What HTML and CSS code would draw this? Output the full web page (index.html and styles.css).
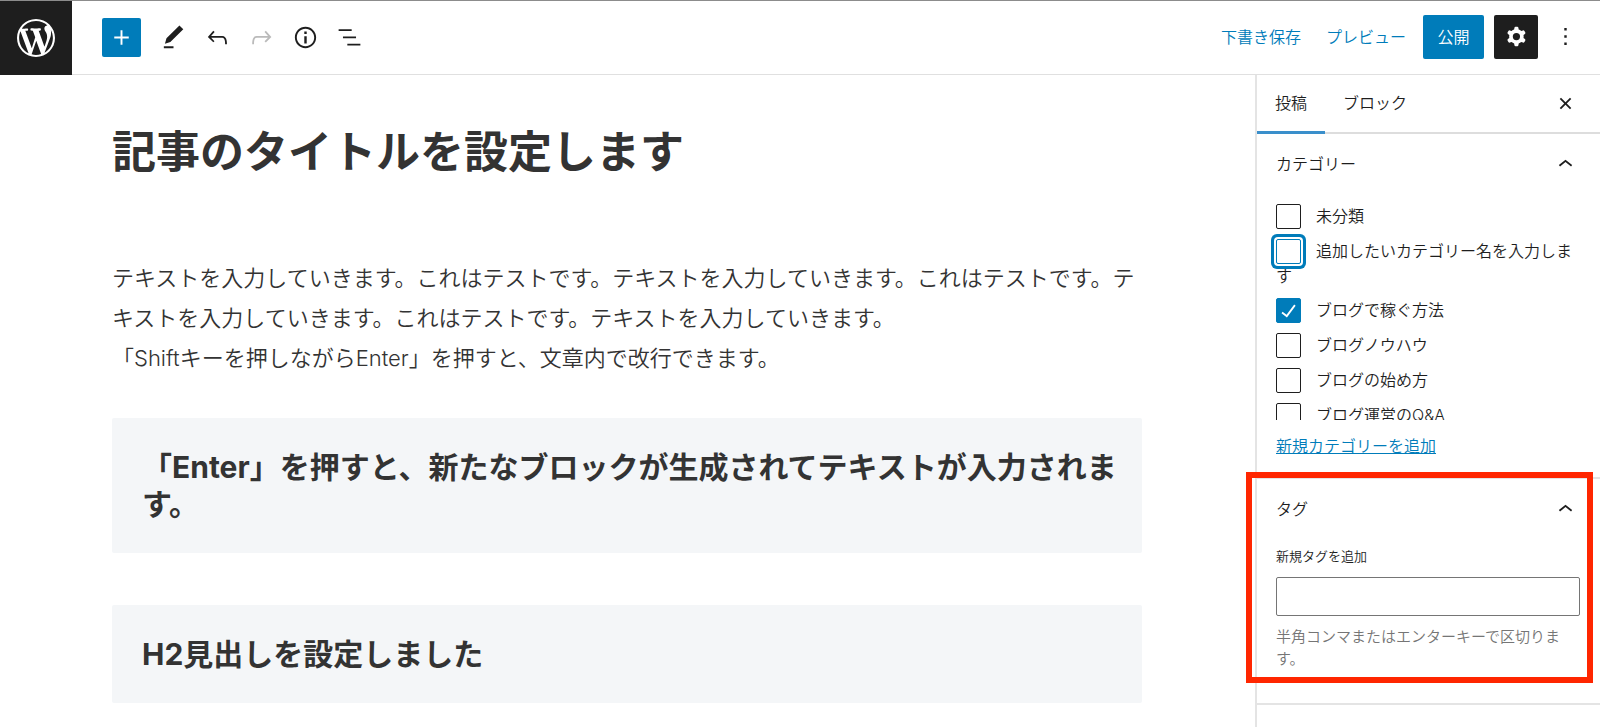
FILE: index.html
```html
<!DOCTYPE html>
<html lang="ja">
<head>
  <meta charset="UTF-8" />
  <meta name="viewport" content="width=device-width, initial-scale=1.0" />
  <title>投稿を編集</title>
  <link rel="stylesheet" href="styles.css">
</head>
<body>
  <!-- Top toolbar -->
  <header class="header">
    <a href="#" class="logo" aria-label="WordPress">
      <svg viewBox="0 0 20 20"><path d="M20 10c0-5.51-4.49-10-10-10C4.48 0 0 4.49 0 10c0 5.52 4.48 10 10 10 5.51 0 10-4.48 10-10zM7.78 15.37L4.37 6.22c.55-.02 1.17-.08 1.17-.08.5-.06.44-1.13-.06-1.11 0 0-1.45.11-2.37.11-.18 0-.37 0-.58-.01C4.12 2.69 6.87 1.11 10 1.11c2.33 0 4.45.87 6.05 2.34-.68-.11-1.65.39-1.65 1.58 0 .74.45 1.36.9 2.1.35.61.55 1.36.55 2.46 0 1.49-1.4 5-1.4 5l-3.03-8.37c.54-.02.82-.17.82-.17.5-.05.44-1.25-.06-1.22 0 0-1.44.12-2.38.12-.87 0-2.33-.12-2.33-.12-.5-.03-.56 1.2-.06 1.22l.92.08 1.26 3.41zM17.41 10c.24-.64.74-1.87.43-4.25.7 1.29 1.05 2.71 1.05 4.25 0 3.29-1.73 6.24-4.4 7.78.97-2.59 1.94-5.2 2.92-7.78zM6.1 18.09C3.12 16.65 1.11 13.53 1.11 10c0-1.3.23-2.48.72-3.59C3.25 10.3 4.67 14.2 6.1 18.09zm4.03-6.63l2.58 6.98c-.86.29-1.76.45-2.71.45-.79 0-1.57-.11-2.29-.33.81-2.38 1.62-4.74 2.42-7.1z"/></svg>
    </a>
    <div class="tools">
      <button type="button" class="add-button" aria-label="ブロックを追加">
        <svg class="icon" viewBox="0 0 24 24"><path d="M18 11.2h-5.2V6h-1.6v5.2H6v1.6h5.2V18h1.6v-5.2H18z"/></svg>
      </button>
      <button type="button" class="icon-button" aria-label="ツール">
        <svg class="icon" viewBox="0 0 24 24"><path d="M20.1 5.1L16.9 2 6.2 12.7l-1.3 4.4 4.5-1.3L20.1 5.1zM4 20.8h8v-1.5H4v1.5z"/></svg>
      </button>
      <button type="button" class="icon-button" aria-label="元に戻す">
        <svg class="icon" viewBox="0 0 24 24"><path d="M18.3 11.7c-.6-.6-1.4-.9-2.3-.9H6.7l2.9-3.3-1.1-1-4.5 5L8.5 16l1-1-2.7-2.7H16c.5 0 .9.2 1.3.5 1 1 1 3.4 1 4.5v.3h1.5v-.2c0-1.5 0-4.3-1.5-5.7z"/></svg>
      </button>
      <button type="button" class="icon-button" aria-label="やり直す" disabled>
        <svg class="icon" viewBox="0 0 24 24"><path d="M15.6 6.5l-1.1 1 2.9 3.3H8c-.9 0-1.7.3-2.3.9-1.4 1.5-1.4 4.2-1.4 5.6v.2h1.5v-.3c0-1.1 0-3.5 1-4.5.3-.3.7-.5 1.3-.5h9.2L14.5 15l1.1 1.1 4.6-4.6-4.6-5z"/></svg>
      </button>
      <button type="button" class="icon-button" aria-label="詳細">
        <svg class="icon" viewBox="0 0 24 24"><path d="M12 3.2c-4.8 0-8.8 3.9-8.8 8.8 0 4.8 3.9 8.8 8.8 8.8 4.8 0 8.8-3.9 8.8-8.8 0-4.8-4-8.8-8.8-8.8zm0 16c-4 0-7.2-3.3-7.2-7.2C4.8 8 8 4.8 12 4.8s7.2 3.3 7.2 7.2c0 4-3.2 7.2-7.2 7.2zM11 17h2v-6h-2v6zm0-8h2V7h-2v2z"/></svg>
      </button>
      <button type="button" class="icon-button" aria-label="リスト表示">
        <svg class="icon" viewBox="0 0 24 24"><path d="M13.8 5.2H3v1.5h10.8V5.2zm-3.6 12v1.5H21v-1.5H10.2zm7.2-6H6.6v1.5h10.8v-1.5z"/></svg>
      </button>
    </div>
    <div class="actions">
      <button type="button" class="text-button">下書き保存</button>
      <button type="button" class="text-button">プレビュー</button>
      <button type="button" class="publish-button">公開</button>
      <button type="button" class="settings-button" aria-label="設定">
        <svg class="icon" viewBox="0 0 24 24"><path fill-rule="evenodd" d="M10.289 4.836A1 1 0 0111.275 4h1.306a1 1 0 01.987.836l.244 1.466c.787.26 1.503.679 2.108 1.218l1.393-.522a1 1 0 011.216.437l.653 1.13a1 1 0 01-.23 1.273l-1.148.944a6.025 6.025 0 010 2.435l1.149.946a1 1 0 01.23 1.272l-.653 1.13a1 1 0 01-1.216.437l-1.394-.522c-.605.54-1.32.958-2.108 1.218l-.244 1.466a1 1 0 01-.987.836h-1.306a1 1 0 01-.986-.836l-.244-1.466a5.995 5.995 0 01-2.108-1.218l-1.394.522a1 1 0 01-1.217-.436l-.653-1.131a1 1 0 01.23-1.272l1.149-.946a6.026 6.026 0 010-2.435l-1.148-.944a1 1 0 01-.23-1.272l.653-1.131a1 1 0 011.217-.437l1.393.522a5.994 5.994 0 012.108-1.218l.244-1.466zM14.929 12a3 3 0 11-6 0 3 3 0 016 0z"/></svg>
      </button>
      <button type="button" class="icon-button" aria-label="オプション">
        <svg class="icon" viewBox="0 0 24 24"><path d="M13 19h-2v-2h2v2zm0-6h-2v-2h2v2zm0-6h-2V5h2v2z"/></svg>
      </button>
    </div>
  </header>

  <div class="main">
    <!-- Post content -->
    <main class="editor">
      <h1 class="post-title">記事のタイトルを設定します</h1>
      <p class="post-text">テキストを入力していきます。これはテストです。テキストを入力していきます。これはテストです。テキストを入力していきます。これはテストです。テキストを入力していきます。<br>「Shiftキーを押しながらEnter」を押すと、文章内で改行できます。</p>
      <h2 class="post-heading">「Enter」を押すと、新たなブロックが生成されてテキストが入力されます。</h2>
      <h2 class="post-heading">H2見出しを設定しました</h2>
    </main>

    <!-- Settings sidebar -->
    <aside class="sidebar">
      <div class="tabs">
        <button type="button" class="tab active">投稿</button>
        <button type="button" class="tab">ブロック</button>
        <button type="button" class="close-button" aria-label="設定を閉じる">
          <svg class="icon" viewBox="0 0 24 24"><path d="M12 13.06l3.712 3.713 1.061-1.06L13.061 12l3.712-3.712-1.06-1.06L12 10.938 8.288 7.227l-1.061 1.06L10.939 12l-3.712 3.712 1.06 1.061L12 13.061z"/></svg>
        </button>
      </div>

      <section class="panel">
        <button type="button" class="panel-toggle" aria-expanded="true">
          カテゴリー
          <svg class="icon" viewBox="0 0 24 24"><path d="M6.5 12.4L12 8l5.5 4.4-.9 1.2L12 10l-4.5 3.6-1-1.2z"/></svg>
        </button>
        <div class="category-list">
          <div class="category"><input type="checkbox" id="cat1"><label for="cat1">未分類</label></div>
          <div class="category"><input type="checkbox" id="cat2" class="focused"><label for="cat2">追加したいカテゴリー名を入力します</label></div>
          <div class="category"><input type="checkbox" id="cat3" checked><label for="cat3">ブログで稼ぐ方法</label></div>
          <div class="category"><input type="checkbox" id="cat4"><label for="cat4">ブログノウハウ</label></div>
          <div class="category"><input type="checkbox" id="cat5"><label for="cat5">ブログの始め方</label></div>
          <div class="category"><input type="checkbox" id="cat6"><label for="cat6">ブログ運営のQ&amp;A</label></div>
        </div>
        <a href="#" class="add-category">新規カテゴリーを追加</a>
      </section>

      <section class="panel tag-panel">
        <button type="button" class="panel-toggle" aria-expanded="true">
          タグ
          <svg class="icon" viewBox="0 0 24 24"><path d="M6.5 12.4L12 8l5.5 4.4-.9 1.2L12 10l-4.5 3.6-1-1.2z"/></svg>
        </button>
        <label class="tag-label" for="newTag">新規タグを追加</label>
        <input type="text" id="newTag" class="tag-input">
        <p class="tag-help">半角コンマまたはエンターキーで区切ります。</p>
        <div class="highlight"></div>
      </section>
    </aside>
  </div>
</body>
</html>
```
FILE: styles.css
```css
* {
  box-sizing: border-box;
}
body {
  margin: 0;
  height: 100vh;
  display: flex;
  flex-direction: column;
  overflow: hidden;
  background: #fff;
  color: #1e1e1e;
  font-family: Inter, "Noto Sans CJK JP", sans-serif;
  font-size: 16px;
  font-weight: 350;
  line-height: 24px;
}
button,
input {
  font: inherit;
  color: inherit;
}
button {
  display: flex;
  align-items: center;
  justify-content: center;
  padding: 0;
  border: none;
  background: none;
  cursor: pointer;
}
.icon {
  display: block;
  width: 29px;
  height: 29px;
  flex-shrink: 0;
  fill: currentColor;
}

/* Header */
.header {
  display: flex;
  align-items: center;
  height: 75px;
  flex-shrink: 0;
  border-top: 1px solid #8c8c8c;
  border-bottom: 1px solid #e0e0e0;
}
.logo {
  display: flex;
  align-items: center;
  justify-content: center;
  align-self: stretch;
  width: 72px;
  margin-bottom: -1px;
  background: #1e1e1e;
}
.logo svg {
  width: 38px;
  height: 38px;
  fill: #fff;
}
.tools {
  display: flex;
  align-items: center;
  margin-left: 30px;
}
.add-button {
  width: 39px;
  height: 39px;
  margin-right: 10px;
  border-radius: 2px;
  background: #007cba;
  color: #fff;
}
.icon-button {
  width: 44px;
  height: 44px;
}
.icon-button:disabled {
  color: #bbb;
}
.actions {
  display: flex;
  align-items: center;
  margin: 0 13px 2px auto;
}
.text-button {
  margin-right: 25px;
  color: #007cba;
}
.publish-button {
  width: 61px;
  height: 44px;
  margin-left: -8px;
  margin-right: 10px;
  border-radius: 2px;
  background: #007cba;
  color: #fff;
}
.settings-button {
  width: 44px;
  height: 44px;
  margin-right: 5px;
  border-radius: 2px;
  background: #1e1e1e;
  color: #fff;
}

/* Editor */
.main {
  display: flex;
  flex: 1;
  min-height: 0;
}
.editor {
  flex: 1;
  min-width: 0;
  padding: 42px 113px 0 112px;
  color: #333;
}
.post-title {
  margin: 0 0 71px;
  font-size: 44px;
  line-height: 70px;
}
.post-text {
  margin: 0 -8px 40px 0;
  font-size: 22px;
  line-height: 40px;
}
.post-heading {
  margin: 0 0 52px;
  padding: 31px 20px 30px 30px;
  border-radius: 2px;
  background: #f4f6f8;
  font-size: 30px;
  line-height: 37px;
}

/* Sidebar */
.sidebar {
  width: 345px;
  flex-shrink: 0;
  border-left: 2px solid #e4e4e4;
}
.tabs {
  display: flex;
  height: 59px;
  padding-right: 20px;
  border-bottom: 2px solid #ddd;
}
.tab {
  height: 59px;
  padding: 0 18px;
  border-bottom: 3px solid transparent;
}
.tab.active {
  border-color: #3a8fcb;
}
.close-button {
  width: 29px;
  margin-left: auto;
}
.panel {
  padding: 0 20px 0 19px;
  border-bottom: 2px solid #e4e4e4;
}
.panel-toggle {
  width: 100%;
  height: 60px;
  justify-content: space-between;
}
.category-list {
  height: 226px;
  margin: 0 -10px;
  padding: 10px 10px 0;
  overflow: hidden;
}
.category {
  margin-bottom: 10px;
}
.category input {
  appearance: none;
  width: 25px;
  height: 25px;
  margin: 0 15px 0 0;
  border: 1px solid #1e1e1e;
  border-radius: 2px;
  background: #fff;
  vertical-align: top;
}
.category input.focused {
  border-color: #007cba;
  box-shadow: 0 0 0 2px #fff, 0 0 0 5px #007cba;
}
.category input:checked {
  border-color: #007cba;
  background: #007cba url("data:image/svg+xml,%3Csvg xmlns='http://www.w3.org/2000/svg' viewBox='0 0 24 24' fill='white'%3E%3Cpath d='M16.7 7.1l-6.3 8.5-3.3-2.5-.9 1.2 4.5 3.4L17.9 8z'/%3E%3C/svg%3E") center / 29px no-repeat;
}
.add-category {
  display: block;
  width: fit-content;
  margin: 14px 0 19px;
  color: #007cba;
}
.tag-panel {
  position: relative;
  padding-bottom: 33px;
}
.tag-label {
  display: block;
  margin: 5px 0 9px;
  font-size: 13px;
}
.tag-input {
  display: block;
  width: 100%;
  height: 39px;
  padding: 0 10px;
  border: 1px solid #757575;
  border-radius: 2px;
}
.tag-help {
  margin: 10px 0 0;
  color: #757575;
  font-size: 15px;
  line-height: 22px;
}
/* red frame over the tag panel */
.highlight {
  position: absolute;
  top: -7px;
  left: -11px;
  right: 7px;
  bottom: 20px;
  border: 6px solid #ff2600;
  pointer-events: none;
}
```
